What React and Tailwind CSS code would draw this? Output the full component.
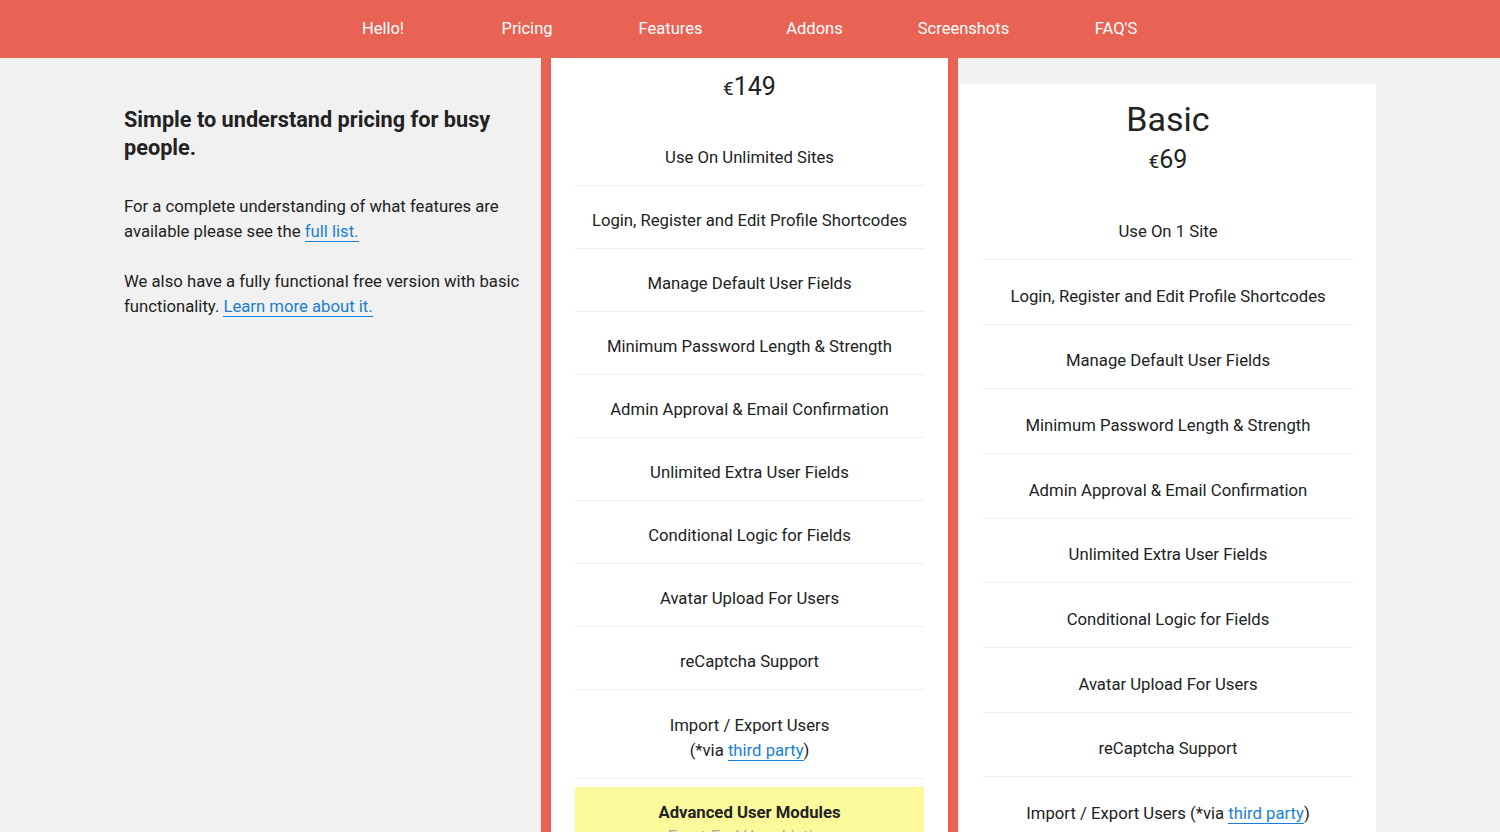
const NAV = [
  { label: 'Hello!', w: 'w-[144px]' },
  { label: 'Pricing', w: 'w-[144px]' },
  { label: 'Features', w: 'w-[143px]' },
  { label: 'Addons', w: 'w-[145px]' },
  { label: 'Screenshots', w: 'w-[153px]' },
  { label: "FAQ'S", w: 'w-[152px]' },
];

const PRO_FEATURES = [
  'Use On Unlimited Sites',
  'Login, Register and Edit Profile Shortcodes',
  'Manage Default User Fields',
  'Minimum Password Length & Strength',
  'Admin Approval & Email Confirmation',
  'Unlimited Extra User Fields',
  'Conditional Logic for Fields',
  'Avatar Upload For Users',
  'reCaptcha Support',
];

const BASIC_FEATURES = [
  'Use On 1 Site',
  'Login, Register and Edit Profile Shortcodes',
  'Manage Default User Fields',
  'Minimum Password Length & Strength',
  'Admin Approval & Email Confirmation',
  'Unlimited Extra User Fields',
  'Conditional Logic for Fields',
  'Avatar Upload For Users',
  'reCaptcha Support',
];

function Link({ children }) {
  return (
    <a href="#" className="text-[#1a7fd4] border-b border-[#1a7fd4]">
      {children}
    </a>
  );
}

function Price({ amount, className = '' }) {
  return (
    <div className={`text-center text-[#222] leading-8 ${className}`}>
      <span className="text-[19px]">€</span>
      <span className="text-[25px]">{amount}</span>
    </div>
  );
}

export default function App() {
  return (
    <div
      className="h-[832px] overflow-hidden bg-[#f1f1f1] text-[#222]"
      style={{ fontFamily: 'Roboto, "Liberation Sans", sans-serif' }}
    >
      <header className="h-[58px] bg-[#e86354] flex items-center pl-[311px]">
        {NAV.map((item) => (
          <a key={item.label} href="#" className={`${item.w} text-center text-white text-[16.5px] pt-[1px]`}>
            {item.label}
          </a>
        ))}
      </header>

      <div className="flex items-start">
        {/* intro copy */}
        <div className="w-[541px] shrink-0 pl-[124px] pr-[10px] pt-[48px]">
          <h2 className="text-[21.7px] leading-[28px] font-bold max-w-[400px]">
            Simple to understand pricing for busy people.
          </h2>
          <p className="mt-[32px] text-[16.7px] leading-[25px] max-w-[405px]">
            For a complete understanding of what features are available please see the{' '}
            <Link>full list.</Link>
          </p>
          <p className="mt-[25px] text-[16.7px] leading-[25px] max-w-[405px]">
            We also have a fully functional free version with basic functionality.{' '}
            <Link>Learn more about it.</Link>
          </p>
        </div>

        {/* highlighted plan */}
        <div className="w-[417px] shrink-0 h-[774px] bg-white border-x-[10px] border-[#e86354]">
          <Price amount="149" className="pt-[13px] pb-[17px]" />
          <ul className="px-6 text-[16.7px]">
            {PRO_FEATURES.map((f) => (
              <li key={f} className="pt-[23px] pb-[15px] leading-6 text-center border-b border-[#eeeeee]">
                {f}
              </li>
            ))}
            <li className="pt-[23px] pb-[15px] leading-[25px] text-center border-b border-[#eeeeee]">
              Import / Export Users
              <br />
              (*via <Link>third party</Link>)
            </li>
          </ul>
          <div className="mx-6 mt-[8px] bg-[#fcf99b] pt-[14px] text-center text-[16.7px]">
            <div className="font-bold leading-6">Advanced User Modules</div>
            <div className="leading-6 text-[#aaa]">Front-End User Listing</div>
          </div>
        </div>

        {/* basic plan */}
        <div className="w-[416px] shrink-0 ml-[2px] mt-[26px] bg-white px-[23px] pb-10">
          <div className="pt-[15px] pb-[16.5px] text-center">
            <div className="text-[34px] leading-10 text-[#222]">Basic</div>
            <Price amount="69" className="mt-[5px]" />
          </div>
          <ul className="text-[16.7px]">
            {BASIC_FEATURES.map((f) => (
              <li key={f} className="pt-[24.5px] pb-[15.17px] leading-6 text-center border-b border-[#eeeeee]">
                {f}
              </li>
            ))}
            <li className="pt-[24.5px] pb-[15.17px] leading-6 text-center border-b border-[#eeeeee]">
              Import / Export Users (*via <Link>third party</Link>)
            </li>
          </ul>
        </div>
      </div>
    </div>
  );
}
